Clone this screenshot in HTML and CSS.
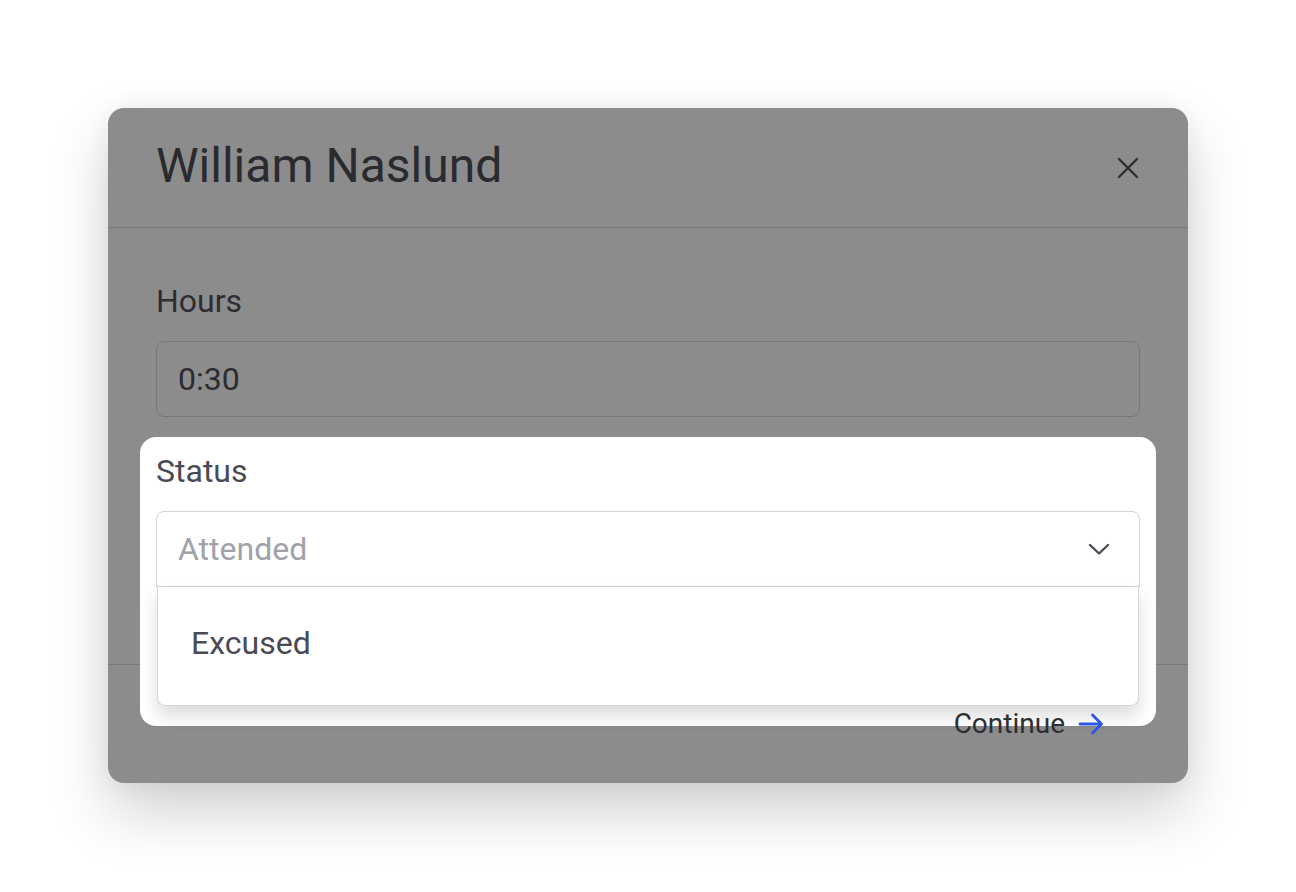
FILE: index.html
```html
<!DOCTYPE html>
<html>
<head>
    <title>William Naslund</title>
    <link rel="stylesheet" href="styles.css">
</head>
<body>
    <div class="modal">
        <div class="modal-header">
            <h2 class="modal-title">William Naslund</h2>
            <button class="close-btn" aria-label="Close">
                <svg width="22" height="22" viewBox="0 0 22 22">
                    <path d="M2 2 L20 20 M20 2 L2 20" stroke="#2c2c31" stroke-width="2.4" stroke-linecap="round" fill="none" />
                </svg>
            </button>
        </div>
        <div class="modal-body">
            <div class="field">
                <label class="field-label">Hours</label>
                <div class="text-input">0:30</div>
            </div>
            <!-- highlighted field, sits above the dimmed modal -->
            <div class="field field-status spotlit">
                <label class="field-label">Status</label>
                <div class="select-wrap">
                    <div class="select-box">
                        <span class="placeholder">Attended</span>
                        <svg width="22" height="13" viewBox="0 0 22 13">
                            <path d="M2 2 L11 10.5 L20 2" stroke="#4a4a55" stroke-width="2.4" stroke-linecap="round" stroke-linejoin="round" fill="none" />
                        </svg>
                    </div>
                    <ul class="dropdown">
                        <li class="option">Excused</li>
                    </ul>
                </div>
            </div>
        </div>
        <div class="modal-footer">
            <button class="continue-btn">
                Continue
                <svg width="26" height="22" viewBox="0 0 26 22">
                    <path d="M2 11 H23 M14.5 2 L23.5 11 L14.5 20" stroke="#2d55e8" stroke-width="2.8" stroke-linecap="round" stroke-linejoin="round" fill="none" />
                </svg>
            </button>
        </div>
    </div>
</body>
</html>
```

FILE: styles.css
```css
html, body {
    height: 100%;
}
body {
    margin: 0;
    padding-top: 108px;
    box-sizing: border-box;
    background-color: #fff;
    font-family: Roboto, "Liberation Sans", sans-serif;
}
.modal {
    width: 1080px;
    margin: 0 auto;
    background-color: #8c8c8c;
    border-radius: 16px;
    box-shadow: 0 30px 60px rgba(0, 0, 0, 0.18), 0 0 24px rgba(0, 0, 0, 0.06);
}
.modal-header {
    display: flex;
    align-items: center;
    justify-content: space-between;
    height: 119px;
    padding: 0 48px;
    border-bottom: 1px solid #7a7a7a;
    box-sizing: content-box;
}
.modal-title {
    margin: -4px 0 0;
    font-size: 48px;
    line-height: 56px;
    font-weight: 400;
    color: #2a2a2f;
}
.close-btn {
    display: flex;
    padding: 0;
    margin-right: 1px;
    border: none;
    background: none;
}
.modal-body {
    padding: 49px 48px 77px;
}
.field-label {
    display: block;
    margin-bottom: 16px;
    font-size: 32px;
    line-height: 48px;
    color: #2d2d33;
}
.text-input {
    padding: 13px 21px;
    border: 1px solid #777;
    border-radius: 8px;
    font-size: 32px;
    line-height: 48px;
    color: #2b2b30;
}
.field-status {
    margin-top: 30px;
}
.spotlit {
    position: relative;
    z-index: 2;
}
.spotlit::before {
    content: "";
    position: absolute;
    top: -10px;
    left: -16px;
    right: -16px;
    bottom: -139px;
    background-color: #fff;
    border-radius: 16px;
    z-index: -1;
}
.spotlit .field-label {
    color: #4a4a55;
}
.select-wrap {
    position: relative;
}
.select-box {
    display: flex;
    align-items: center;
    justify-content: space-between;
    padding: 13px 29px 13px 21px;
    border: 1px solid #d4d4d8;
    border-radius: 8px 8px 0 0;
    font-size: 32px;
    line-height: 48px;
}
.placeholder {
    color: #a1a1aa;
}
.dropdown {
    position: absolute;
    top: 100%;
    left: 1px;
    right: 1px;
    margin: 0;
    padding: 8px 0 14px;
    list-style: none;
    background-color: #fff;
    border: 1px solid #d4d4d8;
    border-top: none;
    border-radius: 0 0 8px 8px;
    box-shadow: 0 10px 18px rgba(0, 0, 0, 0.14);
}
.option {
    padding: 24px 33px;
    font-size: 32px;
    line-height: 48px;
    color: #4a4a55;
}
.modal-footer {
    display: flex;
    justify-content: flex-end;
    padding: 19px 48px;
    border-top: 1px solid #7a7a7a;
}
.continue-btn {
    position: relative;
    z-index: 3;
    display: flex;
    align-items: center;
    gap: 13px;
    padding: 20px 36px 20px 16px;
    border: none;
    background: none;
    font-family: inherit;
    font-size: 28px;
    line-height: 40px;
    color: #2e2e33;
}
```
